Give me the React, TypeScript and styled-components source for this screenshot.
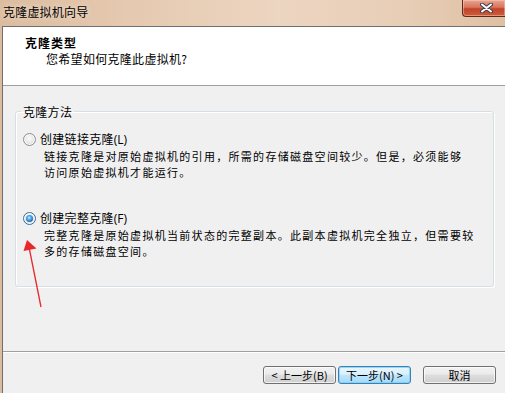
import React from "react";
import styled, { createGlobalStyle } from "styled-components";

const Global = createGlobalStyle`
  html, body { margin: 0; padding: 0; width: 505px; height: 393px; overflow: hidden; background: #e4c8ae; }
  * { box-sizing: border-box; }
`;

const Window = styled.div`
  position: relative;
  width: 505px;
  height: 393px;
  display: flex;
  flex-direction: column;
  background: linear-gradient(90deg, #dbbc9f 0%, #e5c9b0 25%, #ecd5c1 55%, #e8ceb7 80%, #dec0a3 100%);
  font-family: "Noto Sans CJK SC", "Microsoft YaHei", sans-serif;
  color: #000;
  overflow: hidden;
`;

const TitleBar = styled.div`
  height: 26px;
  flex: none;
  display: flex;
  align-items: flex-start;
  justify-content: space-between;
`;

const Title = styled.div`
  font-size: 12px;
  line-height: 14px;
  padding: 5px 0 0 3px;
  letter-spacing: 0.2px;
  text-shadow: 0 0 6px rgba(255, 240, 225, 0.9);
`;

const CloseButton = styled.div`
  width: 43px;
  height: 17px;
  border: 1px solid #5e2a1f;
  border-top: none;
  border-right: none;
  border-radius: 0 0 0 4px;
  background: linear-gradient(#e8a592 0%, #d8765d 45%, #c2432a 55%, #cf5b3b 100%);
  box-shadow: inset 0 0 0 1px rgba(255, 215, 195, 0.45);
  display: flex;
  align-items: center;
  justify-content: center;
  padding-left: 4px;
`;

const Frame = styled.div`
  flex: 1;
  display: flex;
  padding-left: 2px;
  min-height: 0;
`;

const Client = styled.div`
  flex: 1;
  min-width: 0;
  display: flex;
  flex-direction: column;
  background: #f0f0f0;
  border-left: 1px solid #6f6f6f;
  border-top: 1px solid #6f6f6f;
`;

const Header = styled.div`
  height: 59px;
  flex: none;
  background: #fff;
  border-bottom: 1px solid #a0a0a0;
  padding: 8px 0 0 22px;
`;

const Heading = styled.div`
  font-size: 12px;
  line-height: 15px;
  font-weight: bold;
  letter-spacing: 1px;
`;

const SubHeading = styled.div`
  font-size: 12px;
  line-height: 15px;
  margin: 1px 0 0 21px;
  letter-spacing: 0.3px;
`;

const Main = styled.div`
  flex: 1;
  padding-top: 18px;
`;

const Group = styled.fieldset`
  margin: 0 11px 0 12px;
  padding: 0 0 0 7px;
  height: 183px;
  border: 1px solid #d5dfe5;
  border-radius: 3px;
  box-shadow: inset 1px 1px 0 #fff, 1px 1px 0 #fff;
`;

const Legend = styled.legend`
  font-size: 12px;
  line-height: 15px;
  padding: 0 2px;
  margin-left: -2px;
  letter-spacing: 0.3px;
`;

const Option = styled.div<{ $gap: number }>`
  margin-top: ${(p) => p.$gap}px;
`;

const OptionRow = styled.label`
  display: flex;
  align-items: center;
  gap: 4px;
  font-size: 12px;
  line-height: 15px;
  letter-spacing: 0.3px;
`;

const Radio = styled.span<{ $checked?: boolean }>`
  position: relative;
  width: 13px;
  height: 13px;
  flex: none;
  border-radius: 50%;
  border: 1px solid ${(p) => (p.$checked ? "#3d6e95" : "#8e8f8f")};
  background: radial-gradient(circle at 50% 40%, #fbfbfb 0, #e6e6e6 55%, #cfcfcf 100%);
  box-shadow: inset 0 0 0 1px rgba(255, 255, 255, 0.8);
  &::after {
    content: "";
    display: ${(p) => (p.$checked ? "block" : "none")};
    position: absolute;
    left: 2px;
    top: 2px;
    width: 7px;
    height: 7px;
    border-radius: 50%;
    background: radial-gradient(circle at 45% 40%, #c8ecff 0, #4aa8ea 35%, #16609f 80%, #0e4178 100%);
  }
`;

const Mnemonic = styled.span`
  font-family: "Open Sans", "Noto Sans", sans-serif;
  letter-spacing: 0;
`;

const Desc = styled.div`
  padding-left: 21px;
  font-size: 11px;
  line-height: 16px;
  letter-spacing: 1.3px;
  margin-top: 1px;
`;

const DescLine = styled.div`
  white-space: nowrap;
`;

const Footer = styled.div`
  height: 42px;
  flex: none;
  border-top: 1px solid #a0a0a0;
  box-shadow: inset 0 1px 0 #fff;
  display: flex;
  justify-content: flex-end;
  align-items: flex-start;
  padding: 14px 9px 0 0;
`;

const Button = styled.button<{ $primary?: boolean; $gapLeft?: number }>`
  width: 73px;
  height: 18px;
  margin-left: ${(p) => p.$gapLeft ?? 0}px;
  padding: 0;
  font-family: "Noto Sans CJK SC", sans-serif;
  font-size: 11px;
  line-height: 16px;
  color: #000;
  border-radius: 3px;
  border: 1px solid ${(p) => (p.$primary ? "#3c7fb1" : "#707070")};
  background: ${(p) =>
    p.$primary
      ? "linear-gradient(#eaf6fd 0%, #d9f0fc 45%, #bee6fd 50%, #a7d9f5 100%)"
      : "linear-gradient(#f2f2f2 0%, #ebebeb 45%, #dddddd 50%, #cfcfcf 100%)"};
  box-shadow: inset 0 0 0 1px ${(p) => (p.$primary ? "rgba(120,210,250,0.8)" : "rgba(255,255,255,0.7)")};
  letter-spacing: 0;
`;

const Overlay = styled.svg`
  position: absolute;
  left: 0;
  top: 0;
  pointer-events: none;
`;

export default function App() {
  return (
    <>
      <Global />
      <Window>
        <TitleBar>
          <Title>克隆虚拟机向导</Title>
          <CloseButton>
            <svg width="13" height="10" viewBox="0 0 13 10">
              <path d="M2 1.5 L11 8.5 M11 1.5 L2 8.5" stroke="#3b3f52" strokeWidth="4" strokeLinecap="round" />
              <path d="M2 1.5 L11 8.5 M11 1.5 L2 8.5" stroke="#ffffff" strokeWidth="2" strokeLinecap="round" />
            </svg>
          </CloseButton>
        </TitleBar>
        <Frame>
          <Client>
            <Header>
              <Heading>克隆类型</Heading>
              <SubHeading>您希望如何克隆此虚拟机?</SubHeading>
            </Header>
            <Main>
              <Group>
                <Legend>克隆方法</Legend>
                <Option $gap={12}>
                  <OptionRow>
                    <Radio />
                    <span>
                      创建链接克隆<Mnemonic>(L)</Mnemonic>
                    </span>
                  </OptionRow>
                  <Desc>
                    <DescLine>链接克隆是对原始虚拟机的引用，所需的存储磁盘空间较少。但是，必须能够</DescLine>
                    <DescLine>访问原始虚拟机才能运行。</DescLine>
                  </Desc>
                </Option>
                <Option $gap={30}>
                  <OptionRow>
                    <Radio $checked />
                    <span>
                      创建完整克隆<Mnemonic>(F)</Mnemonic>
                    </span>
                  </OptionRow>
                  <Desc>
                    <DescLine>完整克隆是原始虚拟机当前状态的完整副本。此副本虚拟机完全独立，但需要较</DescLine>
                    <DescLine>多的存储磁盘空间。</DescLine>
                  </Desc>
                </Option>
              </Group>
            </Main>
            <Footer>
              <Button>&lt; 上一步(B)</Button>
              <Button $primary $gapLeft={2}>
                下一步(N) &gt;
              </Button>
              <Button $gapLeft={12}>取消</Button>
            </Footer>
          </Client>
        </Frame>
        <Overlay width="505" height="393" viewBox="0 0 505 393">
          <line x1="41" y1="307" x2="29" y2="247" stroke="#e8282c" strokeWidth="1.3" />
          <polygon points="27,240 23.5,251 36.5,248.5" fill="#e8282c" />
        </Overlay>
      </Window>
    </>
  );
}
